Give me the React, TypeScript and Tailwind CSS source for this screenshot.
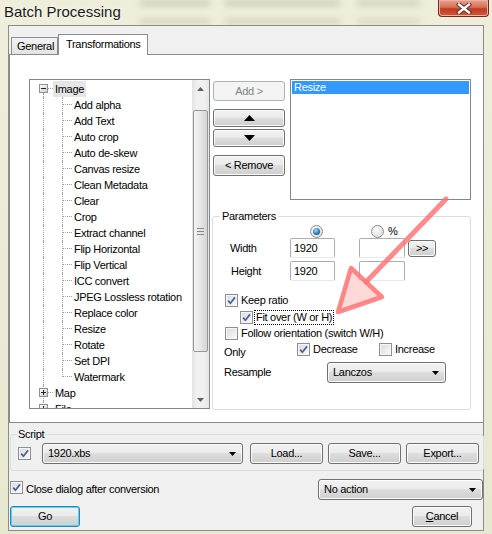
import React from "react";

const btnFace =
  "bg-[linear-gradient(#f2f2f2,#ebebeb_45%,#dddddd_50%,#cfcfcf)] shadow-[inset_0_0_0_1px_#fbfbfb]";

function Btn({ className = "", children }: { className?: string; children?: React.ReactNode }) {
  return (
    <div
      className={`flex items-center justify-center rounded-[3px] border border-[#707070] ${btnFace} ${className}`}
    >
      {children}
    </div>
  );
}

function Arrow({ down = false }: { down?: boolean }) {
  return (
    <svg width="7" height="4" viewBox="0 0 7 4">
      <path d={down ? "M0 0 L7 0 L3.5 4Z" : "M0 4 L7 4 L3.5 0Z"} fill="#000" />
    </svg>
  );
}

function Combo({ value, className = "" }: { value: string; className?: string }) {
  return (
    <div
      className={`flex items-center rounded-[3px] border border-[#707070] pl-[5px] pr-[6px] ${btnFace} ${className}`}
    >
      <span className="flex-1">{value}</span>
      <Arrow down />
    </div>
  );
}

function Check({ checked = false }: { checked?: boolean }) {
  return (
    <span className="relative inline-block h-[13px] w-[13px] shrink-0 border border-[#8e8f8f] bg-[linear-gradient(135deg,#d9dadb,#fbfbfb)] shadow-[inset_0_0_0_1px_#f6f6f6]">
      {checked && (
        <svg className="absolute left-[1px] top-[1px]" width="9" height="9" viewBox="0 0 9 9">
          <path d="M1.2 4.6 L3.4 7.2 L8 1.4" stroke="#4a5f97" strokeWidth="1.7" fill="none" />
        </svg>
      )}
    </span>
  );
}

function Radio({ checked = false }: { checked?: boolean }) {
  return (
    <span className="flex h-[13px] w-[13px] shrink-0 items-center justify-center rounded-full border border-[#8e8f8f] bg-[radial-gradient(circle_at_40%_35%,#ffffff,#d2d2d2)]">
      {checked && (
        <span className="h-[7px] w-[7px] rounded-full bg-[radial-gradient(circle_at_40%_35%,#a6dcf7,#2a7ab8_55%,#0e3b69)]" />
      )}
    </span>
  );
}

function TextBox({ value = "", className = "" }: { value?: string; className?: string }) {
  return (
    <div
      className={`flex h-[20px] items-center rounded-[2px] border border-[#abadb3] border-b-[#e3e9ef] bg-white pl-[3px] ${className}`}
    >
      {value}
    </div>
  );
}

function PlusMinus({ plus = false }: { plus?: boolean }) {
  return (
    <span className="absolute left-[9px] top-[3px] flex h-[9px] w-[9px] items-center justify-center border border-[#919191] bg-[linear-gradient(135deg,#ffffff,#cfcfcf)]">
      <span className="absolute h-px w-[5px] bg-[#222]" />
      {plus && <span className="absolute h-[5px] w-px bg-[#222]" />}
    </span>
  );
}

const items = [
  "Add alpha",
  "Add Text",
  "Auto crop",
  "Auto de-skew",
  "Canvas resize",
  "Clean Metadata",
  "Clear",
  "Crop",
  "Extract channel",
  "Flip Horizontal",
  "Flip Vertical",
  "ICC convert",
  "JPEG Lossless rotation",
  "Replace color",
  "Resize",
  "Rotate",
  "Set DPI",
  "Watermark",
];

const dot = "border-dotted border-[#a0a0a0]";

function Tree() {
  return (
    <div className="flex h-[330px] w-[181px] shrink-0 border border-[#828790] bg-white">
      <div className="flex-1 overflow-hidden pt-px">
        <div className="flex h-[16px] items-center">
          <div className="relative h-full w-[23px] shrink-0">
            <span className={`absolute bottom-0 left-[13px] top-[12px] border-l ${dot}`} />
            <span className={`absolute left-[18px] top-[7px] w-[5px] border-t ${dot}`} />
            <PlusMinus />
          </div>
          <span className="h-full bg-[#e6e6e6] px-[2px] leading-[16px]">Image</span>
        </div>
        {items.map((it, i) => (
          <div key={it} className="flex h-[16px] items-center">
            <div className="relative h-full w-[23px] shrink-0">
              <span className={`absolute bottom-0 left-[13px] top-0 border-l ${dot}`} />
            </div>
            <div className="relative h-full w-[21px] shrink-0">
              <span
                className={`absolute left-[9px] top-0 border-l ${dot} ${
                  i === items.length - 1 ? "h-[8px]" : "bottom-0"
                }`}
              />
              <span className={`absolute left-[10px] top-[7px] w-[9px] border-t ${dot}`} />
            </div>
            <span className="whitespace-nowrap leading-[16px]">{it}</span>
          </div>
        ))}
        {["Map", "File"].map((it) => (
          <div key={it} className="flex h-[16px] items-center">
            <div className="relative h-full w-[23px] shrink-0">
              <span className={`absolute bottom-0 left-[13px] top-0 border-l ${dot}`} />
              <span className={`absolute left-[18px] top-[7px] w-[5px] border-t ${dot}`} />
              <PlusMinus plus />
            </div>
            <span className="px-[2px] leading-[16px]">{it}</span>
          </div>
        ))}
      </div>
      <div className="flex w-[17px] shrink-0 flex-col bg-[linear-gradient(90deg,#e3e3e3,#f0f0f0_30%,#f0f0f0_70%,#e6e6e6)]">
        <div className="flex h-[17px] items-center justify-center">
          <svg width="7" height="4" viewBox="0 0 7 4">
            <path d="M0 4 L7 4 L3.5 0Z" fill="#606060" />
          </svg>
        </div>
        <div className="mx-px mt-[13px] flex h-[242px] flex-col items-center justify-center gap-[2px] rounded-[2px] border border-[#979797] bg-[linear-gradient(90deg,#f2f2f2,#e6e6e6_50%,#d4d4d4)]">
          <span className="h-px w-[7px] bg-[#8a8a8a]" />
          <span className="h-px w-[7px] bg-[#8a8a8a]" />
          <span className="h-px w-[7px] bg-[#8a8a8a]" />
        </div>
        <div className="mt-auto flex h-[17px] items-center justify-center">
          <svg width="7" height="4" viewBox="0 0 7 4">
            <path d="M0 0 L7 0 L3.5 4Z" fill="#606060" />
          </svg>
        </div>
      </div>
    </div>
  );
}

function Parameters() {
  return (
    <div className="relative mt-[16px] h-[194px] w-[259px] rounded-[3px] border border-[#d5dfe5]">
      <span className="absolute -top-[7px] left-[7px] bg-white px-[2px] leading-[13px]">Parameters</span>
      <div className="mt-[8px] flex h-[13px] items-center">
        <span className="ml-[97px]">
          <Radio checked />
        </span>
        <span className="ml-[48px]">
          <Radio />
        </span>
        <span className="ml-[4px] leading-[13px]">%</span>
      </div>
      <div className="flex h-[20px] items-center">
        <span className="w-[77px] pl-[17px]">Width</span>
        <TextBox value="1920" className="w-[45px]" />
        <TextBox className="ml-[24px] w-[46px]" />
        <Btn className="ml-[3px] h-[17px] w-[28px]">&gt;&gt;</Btn>
      </div>
      <div className="mt-[3px] flex h-[20px] items-center">
        <span className="w-[77px] pl-[18px]">Height</span>
        <TextBox value="1920" className="w-[45px]" />
        <TextBox className="ml-[24px] w-[46px]" />
      </div>
      <div className="mt-[13px] flex h-[13px] items-center pl-[12px]">
        <Check checked />
        <span className="ml-[3px]">Keep ratio</span>
      </div>
      <div className="mt-[4px] flex h-[13px] items-center pl-[27px]">
        <Check checked />
        <span className="ml-px border border-dotted border-black px-px leading-[13px]">Fit over (W or H)</span>
      </div>
      <div className="mt-[3px] flex h-[13px] items-center pl-[12px]">
        <Check />
        <span className="ml-[3px]">Follow orientation (switch W/H)</span>
      </div>
      <div className="mt-[3px] flex h-[13px] items-center pl-[11px]">
        <span className="w-[73px] translate-y-[3px]">Only</span>
        <div className="flex w-[82px] items-center">
          <Check checked />
          <span className="ml-[3px]">Decrease</span>
        </div>
        <Check />
        <span className="ml-[3px]">Increase</span>
      </div>
      <div className="mt-[6px] flex h-[21px] items-center pl-[11px]">
        <span className="w-[103px]">Resample</span>
        <Combo value="Lanczos" className="h-[21px] w-[119px]" />
      </div>
    </div>
  );
}

export default function App() {
  return (
    <div className="relative flex h-[534px] w-[492px] flex-col overflow-hidden bg-[linear-gradient(#efeedb,#e8e7cf)] font-['Liberation_Sans',Arial,sans-serif] text-black">
      {/* blurred desktop seen through the glass frame */}
      <div aria-hidden className="pointer-events-none absolute inset-0 blur-[3px]">
        <div className="absolute left-[140px] top-0 h-[6px] w-[70px] bg-[#8f8e7c] opacity-35" />
        <div className="absolute left-[225px] top-0 h-[6px] w-[115px] bg-[#8f8e7c] opacity-35" />
        <div className="absolute left-[357px] top-0 h-[6px] w-[63px] bg-[#8f8e7c] opacity-30" />
        <div className="absolute left-[140px] top-[19px] h-[5px] w-[70px] bg-[#8f8e7c] opacity-30" />
        <div className="absolute left-[225px] top-[19px] h-[5px] w-[115px] bg-[#8f8e7c] opacity-30" />
        <div className="absolute left-[357px] top-[19px] h-[5px] w-[63px] bg-[#8f8e7c] opacity-25" />
      </div>

      <div className="relative flex h-[25px] shrink-0">
        <span className="pl-[4px] pt-[3px] text-[15px] leading-[18px] text-[#1b1b1b] [text-shadow:0_0_6px_#ffffff]">
          Batch Processing
        </span>
        <div className="ml-auto mr-[3px] flex h-[17px] w-[51px] items-center justify-center rounded-b-[4px] border border-t-0 border-[#6e2a1e] bg-[linear-gradient(#e8a290,#d66e56_45%,#c23b20_55%,#d0583c)] shadow-[inset_0_0_0_1px_#f0b0a0]">
          <svg width="16" height="11" viewBox="0 0 16 11">
            <path d="M3 1.5 L13 9.5 M13 1.5 L3 9.5" stroke="#4a2a25" strokeWidth="4.2" strokeLinecap="square" />
            <path d="M3 1.5 L13 9.5 M13 1.5 L3 9.5" stroke="#ffffff" strokeWidth="2.4" strokeLinecap="square" />
          </svg>
        </div>
      </div>

      <div className="relative ml-[8px] flex h-[506px] w-[476px] flex-col border border-[#8d8c80] bg-[#f0f0f0] text-[11px] tracking-[-0.3px]">
        <div className="mt-[8px] flex h-[20px] items-end pl-[2px]">
          <div className="flex h-[17px] w-[47px] items-center border border-b-0 border-[#898c95] bg-[linear-gradient(#f3f3f3,#e3e3e3)] pl-[5px]">
            General
          </div>
          <div className="relative z-10 -mb-px flex h-[21px] w-[90px] items-center border border-b-0 border-[#898c95] bg-white pl-[7px] pb-[2px]">
            Transformations
          </div>
        </div>

        <div className="flex h-[369px] w-[475px] border border-[#898c95] bg-white pl-[19px] pt-[24px]">
          <Tree />
          <div className="ml-[2px] flex w-[259px] flex-col">
            <div className="flex">
              <div className="ml-px mt-[2px] flex w-[72px] flex-col">
                <div className="flex h-[20px] items-center justify-center rounded-[3px] border border-[#adb2b5] bg-[#f4f4f4] text-[#838383]">
                  Add &gt;
                </div>
                <Btn className="mt-[8px] h-[18px]">
                  <svg width="11" height="6" viewBox="0 0 11 6">
                    <path d="M0 6 L11 6 L5.5 0Z" fill="#000" />
                  </svg>
                </Btn>
                <Btn className="mt-[2px] h-[18px]">
                  <svg width="11" height="6" viewBox="0 0 11 6">
                    <path d="M0 0 L11 0 L5.5 6Z" fill="#000" />
                  </svg>
                </Btn>
                <Btn className="mt-[8px] h-[21px]">&lt; Remove</Btn>
              </div>
              <div className="ml-[5px] h-[121px] w-[181px] border border-[#828790] bg-white p-px">
                <div className="h-[13px] bg-[#3399ff] pl-[2px] leading-[13px] text-white">Resize</div>
              </div>
            </div>
            <Parameters />
          </div>
        </div>

        <div className="relative ml-px mt-[11px] h-[37px] w-[474px] rounded-[3px] border border-[#d5dfe5]">
          <span className="absolute -top-[7px] left-[6px] bg-[#f0f0f0] px-px leading-[13px]">Script</span>
          <div className="flex h-[21px] items-center pl-[7px] mt-[8px]">
            <Check checked />
            <Combo value="1920.xbs" className="ml-[11px] h-[21px] w-[201px]" />
            <Btn className="ml-[7px] h-[21px] w-[73px]">Load...</Btn>
            <Btn className="ml-[5px] h-[21px] w-[73px]">Save...</Btn>
            <Btn className="ml-[5px] h-[21px] w-[73px]">Export...</Btn>
          </div>
        </div>

        <div className="mt-[8px] flex h-[21px] items-center">
          <span className="ml-px">
            <Check checked />
          </span>
          <span className="ml-[3px]">Close dialog after conversion</span>
          <Combo value="No action" className="ml-auto h-[21px] w-[165px]" />
        </div>

        <div className="mt-[6px] flex h-[21px] items-center">
          <div className="ml-px flex h-[21px] w-[70px] items-center justify-center rounded-[3px] border border-[#3c7fb1] bg-[linear-gradient(#f2f2f2,#ebebeb_45%,#dddddd_50%,#cfcfcf)] shadow-[inset_0_0_0_1px_#48d8fb]">
            Go
          </div>
          <Btn className="ml-auto mr-[11px] h-[21px] w-[60px]">
            <span>
              <span className="underline">C</span>ancel
            </span>
          </Btn>
        </div>
      </div>

      <svg aria-hidden className="pointer-events-none absolute inset-0" width="492" height="534" viewBox="0 0 492 534">
        <line x1="446" y1="199" x2="366" y2="282" stroke="#ff6e6e" strokeOpacity="0.8" strokeWidth="5" strokeLinecap="round" />
        <path
          d="M351 268 L382 297 L338 312 Z"
          fill="#ffb8b8"
          fillOpacity="0.55"
          stroke="#ff7474"
          strokeOpacity="0.85"
          strokeWidth="4.5"
          strokeLinejoin="round"
        />
      </svg>
    </div>
  );
}
